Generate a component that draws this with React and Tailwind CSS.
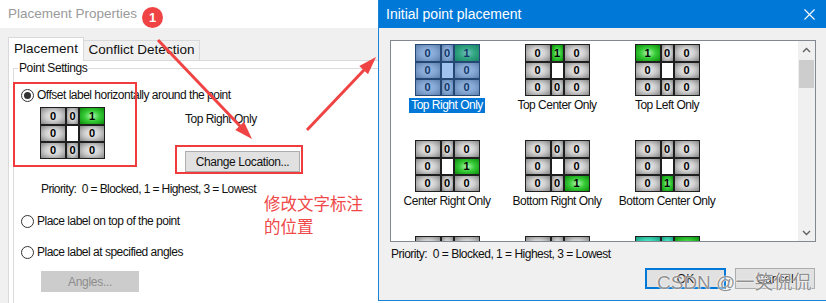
import React from "react";

const gray = "bg-[radial-gradient(ellipse_at_center,#efefef_0%,#cfcfcf_45%,#858585_100%)]";
const green = "bg-[radial-gradient(ellipse_at_center,#b4f7b4_0%,#38cc38_45%,#0a8c0a_100%)]";
const teal = "bg-[radial-gradient(ellipse_at_center,#b4f7e8_0%,#40dab8_45%,#14987c_100%)]";

// cell codes: 0 = gray "0", g = green "1", t = teal "2", w = empty white
function Cell({ c, bare }) {
  if (c === "w") return <div className="bg-white" />;
  const bg = c === "g" ? green : c === "t" ? teal : gray;
  const num = c === "g" ? "1" : c === "t" ? "2" : "0";
  return (
    <div className={`flex items-center justify-center text-[11px] font-bold leading-none text-black ${bg}`}>
      {!bare && num}
    </div>
  );
}

function PointGrid({ cells, selected, bare }) {
  return (
    <div className="relative grid w-fit grid-cols-[24px_11px_24px] grid-rows-[16px_15px_15px] gap-[2px] bg-[#1f1f1f] p-[1px]">
      {cells.split("").map((c, i) => (
        <Cell key={i} c={c} bare={bare} />
      ))}
      {selected && <div className="absolute inset-0 bg-[#2c78dc]/45" />}
    </div>
  );
}

function Radio({ checked, label }) {
  return (
    <div className="flex h-[14px] items-center">
      <span className="flex h-[13px] w-[13px] items-center justify-center rounded-full border border-[#333333] bg-white">
        {checked && <span className="h-[7px] w-[7px] rounded-full bg-[#333333]" />}
      </span>
      {label && (
        <span className="ml-[3px] whitespace-nowrap text-[12px] leading-[14px] tracking-[-0.5px]">{label}</span>
      )}
    </div>
  );
}

const items = [
  { cells: "00g0w0000", label: "Top Right Only", selected: true },
  { cells: "0g00w0000", label: "Top Center Only" },
  { cells: "g000w0000", label: "Top Left Only" },
  { cells: "0000wg000", label: "Center Right Only" },
  { cells: "0000w000g", label: "Bottom Right Only" },
  { cells: "0000w00g0", label: "Bottom Center Only" },
  // third row only peeks in at the bottom of the list
  { cells: "0000w0000", key: "r3a" },
  { cells: "0000w0000", key: "r3b" },
  { cells: "ttg0w0000", key: "r3c" },
];

export default function App() {
  return (
    <div className="relative flex h-[303px] w-[826px] items-start overflow-hidden bg-white font-['Liberation_Sans','Noto_Sans_CJK_SC',sans-serif] text-[#111111]">
      {/* Placement Properties window */}
      <div className="flex h-[303px] w-[378px] shrink-0 flex-col overflow-hidden bg-[#f0f0f0]">
        <div className="flex h-[28px] shrink-0 items-center bg-white pl-[8px]">
          <span className="text-[13.5px] text-[#9a9a9a]">Placement Properties</span>
          <span className="ml-[5px] mt-[7px] flex h-[21px] w-[21px] items-center justify-center rounded-full bg-[#f04444] text-[13px] font-bold text-white">
            1
          </span>
        </div>

        {/* tabs */}
        <div className="flex shrink-0 items-end pl-[8px] pt-[9px]">
          <div className="relative z-10 -mb-px flex h-[24px] w-[76px] items-center justify-center border border-b-0 border-[#d9d9d9] bg-white text-[13.5px]">
            Placement
          </div>
          <div className="flex h-[20px] w-[116px] items-center justify-center border border-b-0 border-l-0 border-[#d9d9d9] bg-[#f0f0f0] text-[13.5px]">
            Conflict Detection
          </div>
        </div>

        <div className="ml-[8px] flex-1 border-l border-t border-[#d9d9d9] bg-white pl-[4px]">
          <fieldset className="h-full border-l border-t border-[#dcdcdc]">
            <legend className="ml-[4px] px-[1px] text-[12px] leading-[14px] tracking-[-0.4px]">Point Settings</legend>
            <div className="flex flex-col items-start pl-[7px]">
              <div className="mt-[13px]">
                <Radio checked label="Offset label horizontally around the point" />
              </div>

              <div className="mt-[5px] flex items-start">
                <div className="ml-[19px]">
                  <PointGrid cells="00g0w0000" />
                </div>
                <div className="ml-[80px] flex flex-col items-start pt-[5px]">
                  <span className="text-[12px] leading-[14px] tracking-[-0.5px]">Top Right Only</span>
                  <button className="mt-[25px] h-[21px] w-[115px] border border-[#adadad] bg-[#e1e1e1] text-[12px] tracking-[-0.4px]">
                    Change Location...
                  </button>
                </div>
              </div>

              <p className="ml-[20px] mt-[10px] whitespace-nowrap text-[12px] leading-[14px] tracking-[-0.6px]">
                Priority:&nbsp; 0 = Blocked, 1 = Highest, 3 = Lowest
              </p>

              <div className="mt-[18px]">
                <Radio label="Place label on top of the point" />
              </div>
              <div className="mt-[17px]">
                <Radio label="Place label at specified angles" />
              </div>
              <button className="ml-[20px] mt-[12px] h-[21px] w-[98px] bg-[#cccccc] text-[12px] tracking-[-0.3px] text-[#8c8c8c]">
                Angles...
              </button>
              <div className="mt-[11px]">
                <Radio />
              </div>
            </div>
          </fieldset>
        </div>
      </div>

      {/* Initial point placement dialog */}
      <div className="flex h-[301px] flex-1 flex-col border-b border-l border-[#1883d7] bg-[#f0f0f0]">
        <div className="flex h-[28px] shrink-0 items-center justify-between bg-[#0078d7] pl-[7px] pr-[11px] text-white">
          <span className="text-[14px]">Initial point placement</span>
          <svg width="11" height="11" viewBox="0 0 11 11" fill="none" stroke="white" strokeWidth="1.1">
            <path d="M0.5 0.5 L10.5 10.5 M10.5 0.5 L0.5 10.5" />
          </svg>
        </div>

        <div className="flex flex-col pl-[11px] pr-[10px] pt-[12px]">
          <div className="flex h-[202px] overflow-hidden border border-[#828790] bg-white">
            <div className="flex flex-1 flex-wrap content-start pl-[1px] pt-[3px]">
              {items.map((it) => (
                <div key={it.label || it.key} className="flex h-[96px] w-[110px] flex-col items-center">
                  <PointGrid cells={it.cells} selected={it.selected} bare={!it.label} />
                  {it.label && (
                    <span
                      className={`mt-[2px] h-[15px] whitespace-nowrap px-[2px] text-[12px] leading-[15px] tracking-[-0.5px] ${
                        it.selected ? "bg-[#0078d7] text-white" : ""
                      }`}
                    >
                      {it.label}
                    </span>
                  )}
                </div>
              ))}
            </div>
            <div className="flex w-[17px] shrink-0 flex-col bg-[#f0f0f0]">
              <div className="flex h-[17px] items-center justify-center">
                <svg width="9" height="6" viewBox="0 0 9 6" fill="none" stroke="#606060" strokeWidth="1.4">
                  <path d="M1 5 L4.5 1.5 L8 5" />
                </svg>
              </div>
              <div className="mx-[1px] mt-[2px] h-[28px] bg-[#cdcdcd]" />
              <div className="flex-1" />
              <div className="flex h-[17px] items-center justify-center">
                <svg width="9" height="6" viewBox="0 0 9 6" fill="none" stroke="#606060" strokeWidth="1.4">
                  <path d="M1 1 L4.5 4.5 L8 1" />
                </svg>
              </div>
            </div>
          </div>

          <p className="mt-[5px] pl-[1px] whitespace-nowrap text-[12px] leading-[14px] tracking-[-0.5px]">
            Priority:&nbsp; 0 = Blocked, 1 = Highest, 3 = Lowest
          </p>

          <div className="mt-[7px] flex justify-end gap-[9px] pr-[1px]">
            <button className="h-[21px] w-[81px] border-2 border-[#0078d7] bg-[#e1e1e1] text-[12px]">OK</button>
            <button className="h-[21px] w-[80px] border border-[#adadad] bg-[#e1e1e1] text-[12px]">Cancel</button>
          </div>
        </div>
      </div>

      {/* annotations */}
      <div className="pointer-events-none absolute left-[13px] top-[82px] h-[85px] w-[124px] border-2 border-[#f03c3c]" />
      <div className="pointer-events-none absolute left-[175px] top-[145px] h-[29px] w-[128px] border-2 border-[#f03c3c]" />
      <div className="pointer-events-none absolute left-[264px] top-[193px] text-[16.5px] leading-[23px] text-[#f04848]">
        修改文字标注
        <br />
        的位置
      </div>
      <svg className="pointer-events-none absolute left-0 top-0" width="826" height="303" viewBox="0 0 826 303">
        <line x1="158" y1="40" x2="240" y2="126" stroke="#f04444" strokeWidth="3" />
        <polygon points="252,139 235.3,130.1 244,121.8" fill="#f04444" />
        <line x1="307" y1="130" x2="364" y2="70" stroke="#f04444" strokeWidth="3" />
        <polygon points="376,57 368,74.2 359.3,66" fill="#f04444" />
      </svg>
      <div className="pointer-events-none absolute left-[657px] top-[270px] whitespace-nowrap text-[19px] leading-[26px] text-[#7c7c7c]/85 [text-shadow:0_0_2px_#ffffff,0_0_1px_#ffffff]">
        CSDN @一笑侃侃
      </div>
    </div>
  );
}
